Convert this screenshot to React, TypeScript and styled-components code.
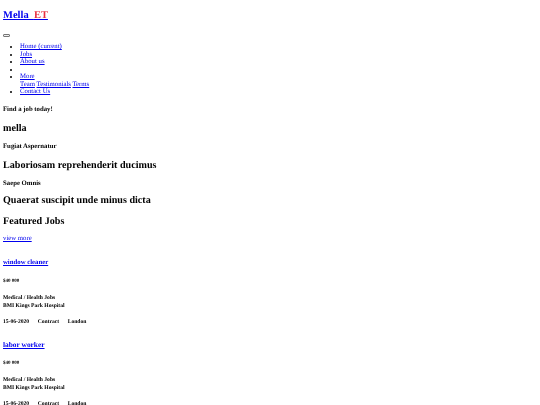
import React from "react";
import styled, { createGlobalStyle } from "styled-components";

const Global = createGlobalStyle`
  html, body { margin: 0; padding: 0; background: #fff; }
  body { padding: 3px; font-family: "Liberation Serif", "Times New Roman", serif; font-size: 6.75px; line-height: 7.5px; color: #000; height: 399px; overflow: hidden; text-rendering: geometricPrecision; }
  a { color: #0000ee; text-decoration: underline; }
`;

const Page = styled.div`
  display: flow-root;
  filter: blur(0.3px);
`;
const Brand = styled.h2`
  margin: 7px 0 0;
  font-size: 10.5px;
  line-height: 12px;
  font-weight: bold;
  white-space: pre;
`;
const BrandAccent = styled.span`
  color: #e8303f;
`;
const Toggler = styled.button`
  display: block;
  width: 7px;
  height: 3px;
  margin: 11.5px 0 0;
  padding: 0;
  background: #efefef;
  border: 0.5px solid #767676;
  border-radius: 1px;
`;
const Nav = styled.ul`
  margin: 6.5px 0 0;
  padding: 0 0 0 17px;
  list-style: disc;
`;
const NavItem = styled.li<{ $tall?: boolean }>`
  height: ${(p) => (p.$tall ? "15px" : "7.5px")};
`;
const Eyebrow = styled.h5<{ $top: number }>`
  margin: ${(p) => p.$top}px 0 0;
  font-size: 6.75px;
  line-height: 8px;
  font-weight: bold;
`;
const Title = styled.h2<{ $top: number }>`
  margin: ${(p) => p.$top}px 0 0;
  font-size: 10.125px;
  line-height: 12px;
  font-weight: bold;
`;
const More = styled.a`
  display: block;
  margin-top: 7px;
  line-height: 8px;
`;
const Job = styled.article<{ $top: number }>`
  margin-top: ${(p) => p.$top}px;
`;
const JobTitle = styled.h4<{ $size: number }>`
  margin: 0;
  font-size: ${(p) => p.$size}px;
  line-height: 9px;
  font-weight: bold;
`;
const Salary = styled.h6`
  margin: 11.5px 0 0;
  font-size: 5px;
  line-height: 6px;
  font-weight: bold;
`;
const Company = styled.h6`
  margin: 9px 0 0;
  font-size: 5.625px;
  line-height: 8px;
  font-weight: bold;
`;
const Meta = styled.div`
  display: flex;
  gap: 8.5px;
  margin-top: 9.5px;
  font-size: 5.625px;
  line-height: 7px;
  font-weight: bold;
`;

const jobs = [
  { title: "window cleaner", size: 6.75, top: 15 },
  { title: "labor worker", size: 7.4, top: 14 },
];

export default function App() {
  return (
    <Page>
      <Global />
      <Brand>
        <a href="#">
          Mella  <BrandAccent>ET</BrandAccent>
        </a>
      </Brand>
      <Toggler aria-label="menu" />
      <Nav>
        <NavItem><a href="#">Home (current)</a></NavItem>
        <NavItem><a href="#">Jobs</a></NavItem>
        <NavItem><a href="#">About us</a></NavItem>
        <NavItem />
        <NavItem $tall>
          <a href="#">More</a>
          <div>
            <a href="#">Team</a> <a href="#">Testimonials</a> <a href="#">Terms</a>
          </div>
        </NavItem>
        <NavItem><a href="#">Contact Us</a></NavItem>
      </Nav>
      <Eyebrow $top={10.5}>Find a job today!</Eyebrow>
      <Title $top={9}>mella</Title>
      <Eyebrow $top={8}>Fugiat Aspernatur</Eyebrow>
      <Title $top={9}>Laboriosam reprehenderit ducimus</Title>
      <Eyebrow $top={8}>Saepe Omnis</Eyebrow>
      <Title $top={7}>Quaerat suscipit unde minus dicta</Title>
      <Title $top={9}>Featured Jobs</Title>
      <More href="#">view more</More>
      {jobs.map((j) => (
        <Job key={j.title} $top={j.top}>
          <JobTitle $size={j.size}><a href="#">{j.title}</a></JobTitle>
          <Salary>$40 000</Salary>
          <Company>
            Medical / Health Jobs
            <br />
            BMI Kings Park Hospital
          </Company>
          <Meta>
            <span>15-06-2020</span>
            <span>Contract</span>
            <span>London</span>
          </Meta>
        </Job>
      ))}
    </Page>
  );
}
